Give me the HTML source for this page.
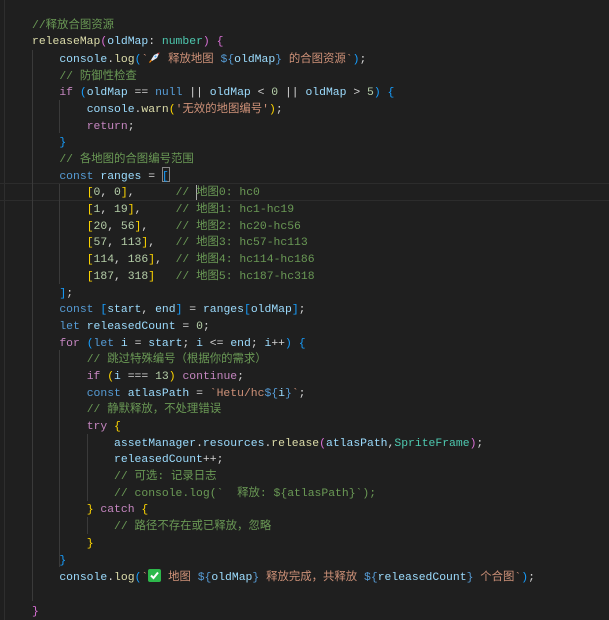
<!DOCTYPE html>
<html><head><meta charset="utf-8"><style>
html,body{margin:0;padding:0;background:#1f1f1f;width:609px;height:620px;overflow:hidden;position:relative}
.code{position:absolute;left:32px;top:17.5px;font-family:"Liberation Mono","Noto Sans CJK SC",monospace;font-size:11.4px;line-height:16.69px;white-space:pre;color:#d4d4d4}
.c{color:#6a9955}.k{color:#569cd6}.p{color:#c586c0}.v{color:#9cdcfe}.f{color:#dcdcaa}.s{color:#ce9178}.n{color:#b5cea8}.t{color:#4ec9b0}
.b1{color:#ffd700}.b2{color:#da70d6}.b3{color:#179fff}
.g{position:absolute;width:1px;background:#3a3a3a}
.hl{position:absolute;left:0;width:609px;top:183px;height:16px;border-top:1px solid #2c2c2c;border-bottom:1px solid #2c2c2c}
.emo{display:inline-block;width:13px;height:13px;vertical-align:-2px}
</style></head><body>
<div style="position:absolute;left:4px;top:0;width:1px;height:620px;background:#2e2e2e"></div>
<div class="hl"></div>
<div class="g" style="left:32px;top:50px;height:551px"></div>
<div class="g" style="left:59px;top:100px;height:33px"></div>
<div class="g" style="left:59px;top:184px;height:100px"></div>
<div class="g" style="left:59px;top:350px;height:217px"></div>
<div class="g" style="left:87px;top:434px;height:67px"></div>
<div class="g" style="left:87px;top:517px;height:17px"></div>
<div style="position:absolute;left:162px;top:167px;width:8px;height:15px;border:1px solid #888;box-sizing:border-box"></div>
<div style="position:absolute;left:196px;top:185px;width:1px;height:15px;background:#aaa"></div>
<div class="code"><span class="c">//释放合图资源</span>
<span class="f">releaseMap</span><span class="b2">(</span><span class="v">oldMap</span>: <span class="t">number</span><span class="b2">)</span> <span class="b2">{</span>
    <span class="v">console</span>.<span class="f">log</span><span class="b3">(</span><span class="s">`<svg class="emo" viewBox="0 0 13 13"><path d="M11.5 1.5 L6 4 L3 9 L4 10 L9 7 Z" fill="#e8e8f0"/><path d="M11.5 1.5 L9.5 2.3 L10.7 3.5Z" fill="#d33"/><path d="M3.5 9.5 L1.5 11.5 L2.5 10 Z" fill="#f80" stroke="#f80"/><circle cx="7.5" cy="5.5" r="1" fill="#4af"/></svg> 释放地图 </span><span class="k">${</span><span class="v">oldMap</span><span class="k">}</span><span class="s"> 的合图资源`</span><span class="b3">)</span>;
    <span class="c">// 防御性检查</span>
    <span class="p">if</span> <span class="b3">(</span><span class="v">oldMap</span> == <span class="k">null</span> || <span class="v">oldMap</span> &lt; <span class="n">0</span> || <span class="v">oldMap</span> &gt; <span class="n">5</span><span class="b3">)</span> <span class="b3">{</span>
        <span class="v">console</span>.<span class="f">warn</span><span class="b1">(</span><span class="s">'无效的地图编号'</span><span class="b1">)</span>;
        <span class="p">return</span>;
    <span class="b3">}</span>
    <span class="c">// 各地图的合图编号范围</span>
    <span class="k">const</span> <span class="v">ranges</span> = <span class="b3">[</span>
        <span class="b1">[</span><span class="n">0</span>, <span class="n">0</span><span class="b1">]</span>,      <span class="c">// 地图0: hc0</span>
        <span class="b1">[</span><span class="n">1</span>, <span class="n">19</span><span class="b1">]</span>,     <span class="c">// 地图1: hc1-hc19</span>
        <span class="b1">[</span><span class="n">20</span>, <span class="n">56</span><span class="b1">]</span>,    <span class="c">// 地图2: hc20-hc56</span>
        <span class="b1">[</span><span class="n">57</span>, <span class="n">113</span><span class="b1">]</span>,   <span class="c">// 地图3: hc57-hc113</span>
        <span class="b1">[</span><span class="n">114</span>, <span class="n">186</span><span class="b1">]</span>,  <span class="c">// 地图4: hc114-hc186</span>
        <span class="b1">[</span><span class="n">187</span>, <span class="n">318</span><span class="b1">]</span>   <span class="c">// 地图5: hc187-hc318</span>
    <span class="b3">]</span>;
    <span class="k">const</span> <span class="b3">[</span><span class="v">start</span>, <span class="v">end</span><span class="b3">]</span> = <span class="v">ranges</span><span class="b3">[</span><span class="v">oldMap</span><span class="b3">]</span>;
    <span class="k">let</span> <span class="v">releasedCount</span> = <span class="n">0</span>;
    <span class="p">for</span> <span class="b3">(</span><span class="k">let</span> <span class="v">i</span> = <span class="v">start</span>; <span class="v">i</span> &lt;= <span class="v">end</span>; <span class="v">i</span>++<span class="b3">)</span> <span class="b3">{</span>
        <span class="c">// 跳过特殊编号（根据你的需求）</span>
        <span class="p">if</span> <span class="b1">(</span><span class="v">i</span> === <span class="n">13</span><span class="b1">)</span> <span class="p">continue</span>;
        <span class="k">const</span> <span class="v">atlasPath</span> = <span class="s">`Hetu/hc</span><span class="k">${</span><span class="v">i</span><span class="k">}</span><span class="s">`</span>;
        <span class="c">// 静默释放，不处理错误</span>
        <span class="p">try</span> <span class="b1">{</span>
            <span class="v">assetManager</span>.<span class="v">resources</span>.<span class="f">release</span><span class="b2">(</span><span class="v">atlasPath</span>,<span class="t">SpriteFrame</span><span class="b2">)</span>;
            <span class="v">releasedCount</span>++;
            <span class="c">// 可选: 记录日志</span>
            <span class="c">// console.log(`  释放: ${atlasPath}`);</span>
        <span class="b1">}</span> <span class="p">catch</span> <span class="b1">{</span>
            <span class="c">// 路径不存在或已释放，忽略</span>
        <span class="b1">}</span>
    <span class="b3">}</span>
    <span class="v">console</span>.<span class="f">log</span><span class="b3">(</span><span class="s">`<svg class="emo" viewBox="0 0 13 13"><rect x="0" y="0" width="13" height="13" rx="2" fill="#2db84b"/><path d="M3 6.5 L5.5 9 L10 3.5" stroke="#fff" stroke-width="2" fill="none"/></svg> 地图 </span><span class="k">${</span><span class="v">oldMap</span><span class="k">}</span><span class="s"> 释放完成，共释放 </span><span class="k">${</span><span class="v">releasedCount</span><span class="k">}</span><span class="s"> 个合图`</span><span class="b3">)</span>;

<span class="b2">}</span></div>
</body></html>
